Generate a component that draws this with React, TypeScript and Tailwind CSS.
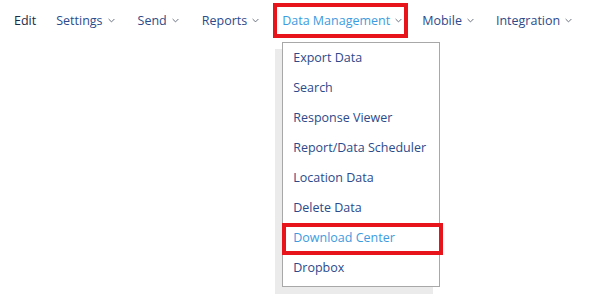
import React from "react";

const Chevron = () => (
  <svg width="7" height="5" viewBox="0 0 7 5" className="ml-[5px] mt-[1px] shrink-0" fill="none">
    <path d="M0.6 1 L3.5 3.9 L6.4 1" stroke="#6b7280" strokeWidth="1" />
  </svg>
);

const navItems = ["Settings", "Send", "Reports"];
const menuItems = [
  "Export Data",
  "Search",
  "Response Viewer",
  "Report/Data Scheduler",
  "Location Data",
  "Delete Data",
  "Download Center",
  "Dropbox",
];

export default function App() {
  return (
    <div
      className="w-[589px] h-[301px] bg-white relative overflow-hidden text-[12.5px] leading-[19px]"
      style={{ fontFamily: '"Open Sans", "Noto Sans", sans-serif' }}
    >
      <nav className="flex items-center h-[38px] mt-[1px] pl-[14px] whitespace-nowrap">
        <span className="text-[#1b2a47] shrink-0">Edit</span>
        <div className="flex items-center ml-[20px] gap-[23px] shrink-0">
          {navItems.map((t) => (
            <span key={t} className="flex items-center text-[#2d4a8a] shrink-0">
              {t}
              <Chevron />
            </span>
          ))}
          <div className="relative flex items-center text-[#3d9be0] shrink-0">
            Data Management
            <Chevron />
            <span className="absolute left-[-9px] right-[-6px] top-[-8px] bottom-[-8px] border-[4px] border-[#e8141c] pointer-events-none" />
            <div className="absolute left-0 top-[31px] w-[158px] bg-white border border-[#a8a8a8] shadow-[-7px_7px_0_#ebebeb] pb-[3px]">
              {menuItems.map((m) => (
                <div
                  key={m}
                  className={`relative h-[30px] flex items-center pl-[10px] whitespace-nowrap ${
                    m === "Download Center" ? "text-[#3d9be0]" : "text-[#2d4a8a]"
                  }`}
                >
                  {m}
                  {m === "Download Center" && (
                    <span className="absolute left-[-1px] right-[-4px] top-0 bottom-[-2px] border-[4px] border-[#e8141c]" />
                  )}
                </div>
              ))}
            </div>
          </div>
          <span className="flex items-center text-[#2d4a8a] shrink-0 ml-[-3px]">
            Mobile
            <Chevron />
          </span>
          <span className="flex items-center text-[#2d4a8a] shrink-0 ml-[-1px]">
            Integration
            <Chevron />
          </span>
        </div>
      </nav>
    </div>
  );
}
